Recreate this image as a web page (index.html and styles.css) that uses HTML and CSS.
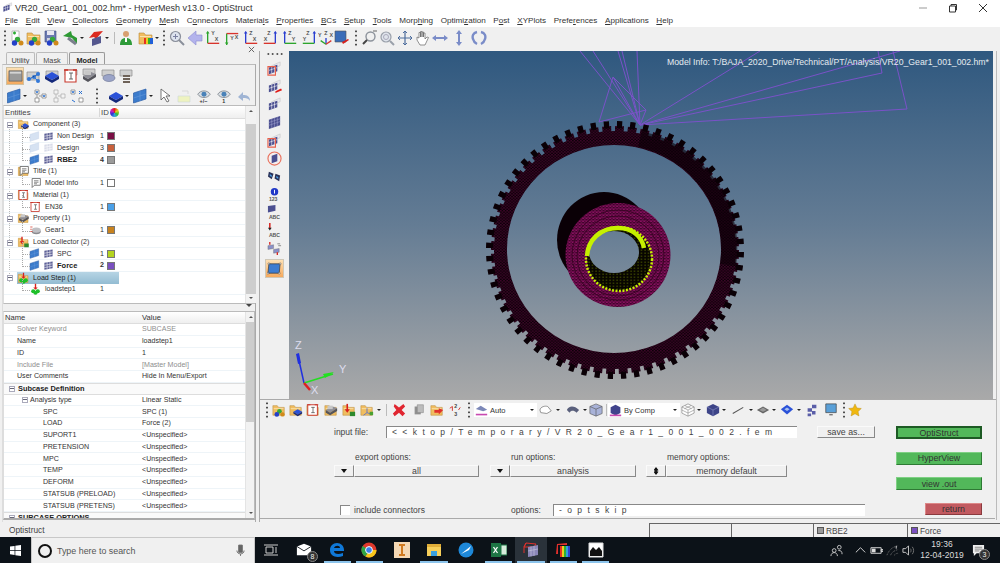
FILE: index.html
```html
<!DOCTYPE html>
<html lang="en">
<head>
<meta charset="utf-8">
<title>VR20_Gear1_001_002.hm* - HyperMesh v13.0 - OptiStruct</title>
<link rel="stylesheet" href="styles.css">
</head>
<body>
<svg class="defs" aria-hidden="true">
  <symbol id="fld" viewBox="0 0 16 16"><path d="M1 3h5l1.500 2H14v9H1z" fill="#f0bd60" stroke="#b98a3a" stroke-width=".6"/><path d="M2 6h11v1H2z" fill="#fbe3ae"/></symbol>
  <symbol id="balls" viewBox="0 0 16 16"><circle cx="8.500" cy="9.500" r="2.700" fill="#35a83a"/><circle cx="5.500" cy="13" r="2.700" fill="#2440c8"/><circle cx="12" cy="13" r="2.500" fill="#d08a1a"/></symbol>
  <symbol id="dia" viewBox="0 0 16 16"><path d="M8 4l7 4-7 4-7-4z" fill="#2b52d8"/><path d="M1 8v3l7 4 7-4V8l-7 4z" fill="#14287a"/></symbol>
  <symbol id="pln" viewBox="0 0 16 16"><path d="M1.500 5L14 1v10L1.500 15z" fill="#3c7ccc" stroke="#2a5da8" stroke-width=".7"/><path d="M8 3v10M1.500 10L14 6" stroke="#6a9cdc" stroke-width=".5"/></symbol>
  <symbol id="gpl" viewBox="0 0 16 16"><path d="M1.500 5L14 1v10L1.500 15z" fill="#d6e2f2" stroke="#c2d2e8" stroke-width=".7"/></symbol>
  <symbol id="msh" viewBox="0 0 16 16"><path d="M2 4l12-2v10L2 14z" fill="#5c5f96"/><path d="M6 3v10.500M10 2.500v10.500M2 7.500l12-2M2 11l12-2" stroke="#fff" stroke-width=".8"/></symbol>
  <symbol id="gms" viewBox="0 0 16 16"><path d="M2 4l12-2v10L2 14z" fill="#d8dbe8"/><path d="M6 3v10.500M10 2.500v10.500M2 7.500l12-2M2 11l12-2" stroke="#fff" stroke-width=".8"/></symbol>
  <symbol id="flt" viewBox="0 0 16 16"><path d="M2 8l8-4 5 2-8 5z" fill="#8e8e96"/><path d="M2 8v3l5 3 8-5V6l-8 5z" fill="#55555c"/><path d="M4 3h6v4H4z" fill="#c8c8c8"/></symbol>
  <symbol id="mat" viewBox="0 0 16 16"><path d="M2 2h11v12H2z" fill="#fff" stroke="#c8382c" stroke-width="1.100"/><path d="M6 5h4M8 5v6M6 11h4" stroke="#555" stroke-width=".9"/><path d="M1 2h4M10 2h4" stroke="#c8382c" stroke-width="1.400"/></symbol>
  <symbol id="note" viewBox="0 0 16 16"><path d="M3.500 2h11v9h-8l-3 3z" fill="#fff" stroke="#444" stroke-width=".9"/><path d="M6 5h6M6 7h6M6 9h4" stroke="#444" stroke-width=".8"/></symbol>
  <symbol id="prop" viewBox="0 0 16 16"><ellipse cx="9" cy="10" rx="6" ry="3.500" fill="#8a8a8e"/><ellipse cx="9" cy="8" rx="6" ry="3.500" fill="#c0c0c4"/><path d="M1 4h3M1 7h2M1 10h3" stroke="#d03a2c" stroke-width="1"/></symbol>
  <symbol id="lc" viewBox="0 0 16 16"><path d="M6 1v7" stroke="#d8201c" stroke-width="1.800"/><path d="M3 7l3 4 3-4z" fill="#d8201c"/><path d="M9 10h6v5H9z" fill="#2d8a2d"/></symbol>
  <symbol id="ls" viewBox="0 0 16 16"><path d="M8 1v6" stroke="#d8201c" stroke-width="1.800"/><path d="M5 6l3 3 3-3z" fill="#d8201c"/><circle cx="5" cy="11" r="2.800" fill="#1fbf2a"/><circle cx="11" cy="11" r="2.800" fill="#1fbf2a"/><circle cx="8" cy="13" r="2.800" fill="#1fbf2a"/></symbol>
  <symbol id="comp" viewBox="0 0 16 16"><use href="#fld"/><path d="M10 7l5 3-5 3-5-3z" fill="#2b52d8"/><path d="M5 10v2l5 3 5-3v-2l-5 3z" fill="#14287a"/></symbol>
  <symbol id="eye" viewBox="0 0 16 16"><path d="M1 6c3-5 11-5 14 0-3 5-11 5-14 0z" fill="#d8dde2" stroke="#707880" stroke-width=".8"/><circle cx="8" cy="6" r="2.800" fill="#4a82b8"/></symbol>
  <symbol id="gpm" viewBox="0 0 16 16"><path d="M5 5l9-4v4l-9 4z" fill="#e8e8ee" stroke="#bbb" stroke-width=".5"/><path d="M2 7l9-3v7l-9 3z" fill="#4b4f90"/><path d="M5 6v7M8 5v7M2 10l9-3" stroke="#fff" stroke-width=".6"/></symbol>
</svg>

<header class="titlebar">
  <svg class="ti" viewBox="0 0 16 16"><use href="#gpm"/></svg>
  <span class="tt">VR20_Gear1_001_002.hm* - HyperMesh v13.0 - OptiStruct</span>
  <span class="winbtn">
    <svg viewBox="0 0 10 10"><path d="M1 5h8" stroke="#999"/></svg>
    <svg viewBox="0 0 10 10"><path d="M1.500 3h6v6h-6zM3 3V1.500h5.500V7H7.500" fill="none" stroke="#333"/></svg>
    <svg viewBox="0 0 10 10"><path d="M1 1l8 8M9 1l-8 8" stroke="#333"/></svg>
  </span>
</header>
<nav class="menubar">
  <span><u>F</u>ile</span><span><u>E</u>dit</span><span><u>V</u>iew</span><span><u>C</u>ollectors</span><span><u>G</u>eometry</span><span><u>M</u>esh</span><span>C<u>o</u>nnectors</span><span>Materia<u>l</u>s</span><span><u>P</u>roperties</span><span><u>B</u>Cs</span><span><u>S</u>etup</span><span><u>T</u>ools</span><span>Morp<u>h</u>ing</span><span>Optimi<u>z</u>ation</span><span>P<u>o</u>st</span><span><u>X</u>YPlots</span><span>Prefe<u>r</u>ences</span><span><u>A</u>pplications</span><span><u>H</u>elp</span>
</nav>

<div class="toolbar">
  <i class="dots"></i>
  <span class="c w17"><svg viewBox="0 0 16 16"><path d="M3 1h7v10H3z" fill="#fff" stroke="#999" stroke-width=".6"/><path d="M4 3h3M5.500 1.500v3" stroke="#2cab33" stroke-width="1.500"/><use href="#balls"/></svg></span>
  <span class="c"><svg viewBox="0 0 16 16"><use href="#fld"/><use href="#balls"/></svg></span>
  <span class="c"><svg viewBox="0 0 16 16"><path d="M1 1h11v11H1z" fill="#6c7ab2" stroke="#3e4a80" stroke-width=".6"/><path d="M3 1h7v4H3z" fill="#e8e8f2"/><path d="M3 8h6v4H3z" fill="#d2d2de"/><use href="#balls"/></svg></span>
  <span class="c"><svg viewBox="0 0 16 16"><path d="M9 1L1 6l9 2 5 6V8L10 5z" fill="#2e9a34"/><path d="M6 8l8 6" stroke="#7b7f8c" stroke-width="3"/></svg></span><i class="caret"></i>
  <span class="c w17"><svg viewBox="0 0 16 16"><path d="M15 1L6 2 1 8l5-1 2 2z" fill="#dc2a20"/><path d="M4 9l9-3v7l-9 3z" fill="#54578e"/></svg></span><i class="caret"></i>
  <i class="sep"></i>
  <span class="c w20"><svg viewBox="0 0 16 16"><circle cx="8" cy="4" r="3" fill="#d8a070"/><path d="M2 15c0-6 3-7 6-7s6 1 6 7z" fill="#2f9b3a"/><path d="M7 8h2v4H7z" fill="#fff"/></svg></span>
  <span class="c w19"><svg viewBox="0 0 16 16"><use href="#fld"/><path d="M6 8h2v6H6z" fill="#e83020"/><path d="M8 8h2v6H8z" fill="#e8d020"/><path d="M10 8h2v6h-2z" fill="#30b030"/><path d="M12 8h3v6h-3z" fill="#2060d8"/></svg></span><i class="caret w5"></i>
  <i class="dots w7"></i>
  <span class="c w19"><svg viewBox="0 0 16 16"><circle cx="6.500" cy="6.500" r="5" fill="#dde3ee" stroke="#8a8f9a" stroke-width="1.200"/><path d="M10 10l5 5" stroke="#8a8f9a" stroke-width="2"/><path d="M4 6.500h5M6.500 4v5" stroke="#7a80a0"/></svg></span>
  <span class="c"><svg viewBox="0 0 16 16"><path d="M9 1v4h6v6H9v4L1 8z" fill="#b3b3ec" stroke="#8c8cd0" stroke-width=".6"/></svg></span>
  <span class="c"><svg class="ax" viewBox="0 0 18 18"><path d="M3 2v13" stroke="#2ca52c" stroke-width="1.500"/><path d="M3 15h13" stroke="#d8342c" stroke-width="1.500"/><path d="M1 4l2-3 2 3z" fill="#2ca52c"/><text x="7" y="6">Y</text><text x="11" y="12">X</text></svg></span>
  <span class="c w20"><svg class="ax" viewBox="0 0 18 18"><path d="M3 4v13" stroke="#2ca52c" stroke-width="1.500"/><path d="M3 4h13" stroke="#d8342c" stroke-width="1.500"/><path d="M1 14l2 3 2-3z" fill="#2ca52c"/><text x="7" y="11">Y</text><text x="12" y="10">X</text></svg></span>
  <span class="c"><svg class="ax" viewBox="0 0 18 18"><path d="M3 2v13" stroke="#2a3ed0" stroke-width="1.500"/><path d="M3 15h13" stroke="#d8342c" stroke-width="1.500"/><path d="M1 4l2-3 2 3z" fill="#2a3ed0"/><text x="7" y="6">Z</text><text x="11" y="12">X</text></svg></span>
  <span class="c w20"><svg class="ax" viewBox="0 0 18 18"><path d="M15 2v13" stroke="#2a3ed0" stroke-width="1.500"/><path d="M2 15h13" stroke="#d8342c" stroke-width="1.500"/><path d="M13 4l2-3 2 3z" fill="#2a3ed0"/><text x="6" y="6">Z</text><text x="2" y="12">X</text></svg></span>
  <span class="c w20"><svg class="ax" viewBox="0 0 18 18"><path d="M3 2v13" stroke="#2a3ed0" stroke-width="1.500"/><path d="M3 15h13" stroke="#2ca52c" stroke-width="1.500"/><path d="M1 4l2-3 2 3z" fill="#2a3ed0"/><text x="7" y="6">Z</text><text x="11" y="12">Y</text></svg></span>
  <span class="c"><svg class="ax" viewBox="0 0 18 18"><path d="M15 2v13" stroke="#2a3ed0" stroke-width="1.500"/><path d="M2 15h13" stroke="#2ca52c" stroke-width="1.500"/><path d="M13 4l2-3 2 3z" fill="#2a3ed0"/><text x="6" y="6">Z</text><text x="2" y="12">Y</text></svg></span>
  <span class="c w16"><svg class="ax" viewBox="0 0 18 18"><path d="M9 9v7" stroke="#2a3ed0" stroke-width="1.500"/><path d="M9 16L3 12" stroke="#2ca52c" stroke-width="1.500"/><path d="M9 16l6-4" stroke="#d8342c" stroke-width="1.500"/><text x="0" y="8">Y</text><text x="7" y="6">Z</text><text x="13" y="8">X</text></svg></span>
  <span class="c w16"><svg viewBox="0 0 16 16"><path d="M1 1h11v11H1z" fill="#3a6cb8" stroke="#555" stroke-width=".6"/><path d="M15 10l-6 4-1-2 6-3z" fill="#d8201c"/></svg></span>
  <i class="dots w12"></i>
  <span class="c w16"><svg viewBox="0 0 16 16"><circle cx="8.500" cy="6.500" r="4.500" fill="none" stroke="#8d939c" stroke-width="1.400"/><path d="M5 10l-4 4" stroke="#444" stroke-width="2"/><path d="M11 1h4" stroke="#666"/></svg></span>
  <span class="c"><svg viewBox="0 0 16 16"><circle cx="7" cy="7" r="5" fill="#dfe4ec" stroke="#9aa0aa" stroke-width="1.200"/><circle cx="7" cy="7" r="2.500" fill="none" stroke="#aab"/><path d="M11 11l4 4" stroke="#9aa0aa" stroke-width="2"/></svg></span>
  <span class="c"><svg viewBox="0 0 16 16"><path d="M8 1v14M1 8h14" stroke="#4c6c9c" stroke-width="1.200"/><path d="M6 3l2-2 2 2M6 13l2 2 2-2M3 6L1 8l2 2M13 6l2 2-2 2" fill="none" stroke="#4c6c9c"/></svg></span>
  <span class="c"><svg viewBox="0 0 16 16"><path d="M5 15l-3-5V7l2 1V2.500h1.500V7V1.500H7V7V2h1.500v5V3H10v6l2-2 1.500.5L10 15z" fill="#fff" stroke="#666" stroke-width=".7"/></svg></span>
  <span class="c w16"><svg viewBox="0 0 16 16"><path d="M0 8l4-3v2h8V5l4 3-4 3V9H4v2z" fill="#7a8cc8"/></svg></span>
  <span class="c w22"><svg viewBox="0 0 16 16"><path d="M8 0l3 4H9v8h2l-3 4-3-4h2V4H5z" fill="#7a8cc8"/></svg></span>
  <span class="c"><svg viewBox="0 0 16 16"><path d="M6 2C2 3 1 6 2 9c.5 2 2 4 4 5M10 2c4 1 5 4 4 7-.5 2-2 4-4 5" fill="none" stroke="#7a8cc8" stroke-width="2.400"/></svg></span>
</div>

<main class="main">
  <section class="left">
    <svg class="closex" viewBox="0 0 8 8"><path d="M1 1l6 6M7 1L1 7" stroke="#555"/></svg>
    <div class="tabs">
      <span class="tab t1">Utility</span><span class="tab t2">Mask</span><span class="tab t3">Model</span>
    </div>
    <div class="lbody">
      <div class="lrow r1">
        <span class="hl"><svg viewBox="0 0 16 16"><path d="M1 3h14v11H1z" fill="#9a9a9a" stroke="#555" stroke-width=".7"/><path d="M2 4h12v2H2z" fill="#d4d4d4"/></svg></span>
        <span class="c w18"><svg viewBox="0 0 16 16"><path d="M2 4h12v8H2z" fill="#cfcfcf" stroke="#8c8c8c" stroke-width=".7"/><circle cx="9" cy="9" r="2" fill="#3278d8"/><circle cx="4" cy="11" r="2" fill="#3278d8"/><circle cx="13" cy="6" r="2" fill="#3278d8"/><circle cx="13" cy="13" r="2" fill="#3278d8"/><path d="M4 11l5-2 4-3M9 9l4 4" stroke="#3278d8"/></svg></span>
        <span class="c w19"><svg viewBox="0 0 16 16"><path d="M2 3h12v6H2z" fill="#cfcfcf" stroke="#8c8c8c" stroke-width=".7"/><use href="#dia"/></svg></span>
        <span class="c w19"><svg viewBox="0 0 16 16"><path d="M2 2h12v5H2z" fill="#cfcfcf" stroke="#8c8c8c" stroke-width=".7"/><use href="#mat"/></svg></span>
        <span class="c w18"><svg viewBox="0 0 16 16"><path d="M2 1h12v6H2z" fill="#cfcfcf" stroke="#8c8c8c" stroke-width=".7"/><use href="#flt"/></svg></span>
        <span class="c w19"><svg viewBox="0 0 16 16"><path d="M2 2h12v6H2z" fill="#cfcfcf" stroke="#8c8c8c" stroke-width=".7"/><ellipse cx="9" cy="10" rx="6" ry="3.500" fill="#9ba4c8" stroke="#707898" stroke-width=".7"/></svg></span>
        <span class="c w18"><svg viewBox="0 0 16 16"><path d="M2 2h12v6H2z" fill="#cfcfcf" stroke="#8c8c8c" stroke-width=".7"/><path d="M5 7h7v2H5zM5 10h7v2H5zM5 13h7v2H5z" fill="#6e6258"/></svg></span>
      </div>
      <div class="lrow r2">
        <span class="c w16"><svg viewBox="0 0 16 16"><use href="#pln"/></svg></span><i class="caret w8"></i>
        <span class="c w20"><svg viewBox="0 0 16 16"><path d="M3 2h4v4H3zM3 10h4v4H3zM10 6h4v4h-4z" fill="#fff" stroke="#777" stroke-width=".7"/><path d="M4 3l1 2 1-2M11 7l1 2 1-2" stroke="#2a70d0" fill="none"/><path d="M5 6v4M7 8h3" stroke="#999"/></svg></span>
        <span class="c w18"><svg viewBox="0 0 16 16"><path d="M3 2h4v4H3zM3 10h4v4H3zM10 6h4v4h-4z" fill="#f4f4f4" stroke="#aaa" stroke-width=".7"/><path d="M5 6v4M7 8h3" stroke="#bbb"/></svg></span>
        <span class="c w18"><svg viewBox="0 0 16 16"><path d="M2 2h4v4H2zM10 10h4v4h-4z" fill="#fff" stroke="#777" stroke-width=".7"/><path d="M3 3l1 2 1-2M10 3l3 3M13 3l-3 3M3 12l3 2" stroke="#2a70d0" fill="none"/></svg></span>
        <i class="dots w22"></i>
        <span class="c w16"><svg viewBox="0 0 16 16"><use href="#dia"/></svg></span><i class="caret w8"></i>
        <span class="c w16"><svg viewBox="0 0 16 16"><use href="#pln"/></svg></span><i class="caret w8"></i>
        <span class="c w18"><svg viewBox="0 0 16 16"><path d="M4 1v11l3-3 3 5 2-1-3-5h4z" fill="#fff" stroke="#555" stroke-width=".8"/></svg></span>
        <span class="c w20"><svg viewBox="0 0 16 16"><path d="M2 8h12v6H2z" fill="#eef3c0" stroke="#cdd8d8" stroke-width=".6"/><path d="M6 3h6v3" fill="none" stroke="#d8d8d8"/></svg></span>
        <span class="c w20"><svg viewBox="0 0 16 18"><use href="#eye"/><text class="eyet" x="3" y="17">+/−</text></svg></span>
        <span class="c w20"><svg viewBox="0 0 16 18"><use href="#eye"/><text class="eyet" x="6" y="17">1</text></svg></span>
        <span class="c w20"><svg viewBox="0 0 16 16"><path d="M2 9l5-5v3c4 0 7 1 7 6-2-3-4-3-7-3v3z" fill="#9fb4d4"/></svg></span>
      </div>

      <div class="split tree">
        <div class="tcol">
          <div class="thead"><span class="th1">Entities</span><span class="th2">ID</span><span class="wheel"></span></div>
          <div class="row l0"><b class="ex"></b><svg class="ic" viewBox="0 0 16 16"><use href="#comp"/></svg>Component (3)</div>
          <div class="row l1"><svg class="ic2" viewBox="0 0 16 16"><use href="#gpl"/></svg><svg class="ic2" viewBox="0 0 16 16"><use href="#msh"/></svg><span class="t">Non Design</span><em>1</em><s class="sw s1"></s></div>
          <div class="row l1"><svg class="ic2" viewBox="0 0 16 16"><use href="#gpl"/></svg><svg class="ic2" viewBox="0 0 16 16"><use href="#gms"/></svg><span class="t">Design</span><em>3</em><s class="sw s2"></s></div>
          <div class="row l1 bold"><svg class="ic2" viewBox="0 0 16 16"><use href="#pln"/></svg><svg class="ic2" viewBox="0 0 16 16"><use href="#msh"/></svg><span class="t">RBE2</span><em>4</em><s class="sw s3"></s></div>
          <div class="row l0"><b class="ex"></b><svg class="ic" viewBox="0 0 16 16"><use href="#fld"/><use href="#note"/></svg>Title (1)</div>
          <div class="row l2"><svg class="ic" viewBox="0 0 16 16"><use href="#note"/></svg><span class="t">Model Info</span><em>1</em><s class="sw s4"></s></div>
          <div class="row l0"><b class="ex"></b><svg class="ic" viewBox="0 0 16 16"><use href="#fld"/><use href="#mat"/></svg>Material (1)</div>
          <div class="row l2"><svg class="ic" viewBox="0 0 16 16"><use href="#mat"/></svg><span class="t">EN36</span><em>1</em><s class="sw s5"></s></div>
          <div class="row l0"><b class="ex"></b><svg class="ic" viewBox="0 0 16 16"><use href="#fld"/><use href="#flt"/></svg>Property (1)</div>
          <div class="row l2"><svg class="ic" viewBox="0 0 16 16"><use href="#prop"/></svg><span class="t">Gear1</span><em>1</em><s class="sw s6"></s></div>
          <div class="row l0"><b class="ex"></b><svg class="ic" viewBox="0 0 16 16"><use href="#fld"/><use href="#lc"/></svg>Load Collector (2)</div>
          <div class="row l1"><svg class="ic2" viewBox="0 0 16 16"><use href="#pln"/></svg><svg class="ic2" viewBox="0 0 16 16"><use href="#msh"/></svg><span class="t">SPC</span><em>1</em><s class="sw s7"></s></div>
          <div class="row l1 bold"><svg class="ic2" viewBox="0 0 16 16"><use href="#pln"/></svg><svg class="ic2" viewBox="0 0 16 16"><use href="#msh"/></svg><span class="t">Force</span><em>2</em><s class="sw s8"></s></div>
          <div class="row l0 sel"><b class="ex"></b><svg class="ic" viewBox="0 0 16 16"><use href="#fld"/><use href="#ls"/></svg>Load Step (1)</div>
          <div class="row l2"><svg class="ic" viewBox="0 0 16 16"><use href="#ls"/></svg><span class="t">loadstep1</span><em>1</em></div>
        </div>
        <div class="sb sb1"><i class="up"></i><i class="thumb"></i><i class="dn"></i></div>
      </div>

      <div class="sash"><i></i></div>

      <div class="split props">
        <div class="pcol">
          <div class="phead"><span>Name</span><span>Value</span></div>
          <div class="pr gy"><span>Solver Keyword</span><span>SUBCASE</span></div>
          <div class="pr"><span>Name</span><span>loadstep1</span></div>
          <div class="pr"><span>ID</span><span>1</span></div>
          <div class="pr gy"><span>Include File</span><span>[Master Model]</span></div>
          <div class="pr"><span>User Comments</span><span>Hide In Menu/Export</span></div>
          <div class="pr sec"><b class="ex"></b><span>Subcase Definition</span></div>
          <div class="pr at"><span><b class="ex"></b>Analysis type</span><span>Linear Static</span></div>
          <div class="pr ch"><span>SPC</span><span>SPC (1)</span></div>
          <div class="pr ch"><span>LOAD</span><span>Force (2)</span></div>
          <div class="pr ch"><span>SUPORT1</span><span>&lt;Unspecified&gt;</span></div>
          <div class="pr ch"><span>PRETENSION</span><span>&lt;Unspecified&gt;</span></div>
          <div class="pr ch"><span>MPC</span><span>&lt;Unspecified&gt;</span></div>
          <div class="pr ch"><span>TEMP</span><span>&lt;Unspecified&gt;</span></div>
          <div class="pr ch"><span>DEFORM</span><span>&lt;Unspecified&gt;</span></div>
          <div class="pr ch"><span>STATSUB (PRELOAD)</span><span>&lt;Unspecified&gt;</span></div>
          <div class="pr ch"><span>STATSUB (PRETENS)</span><span>&lt;Unspecified&gt;</span></div>
          <div class="pr sec"><b class="ex"></b><span>SUBCASE OPTIONS</span></div>
        </div>
        <div class="sb sb2"><i class="up"></i><i class="thumb"></i><i class="dn"></i></div>
      </div>
    </div>
  </section>

  <section class="right">
    <div class="top">
      <div class="rail">
        <i class="dots4"></i>
        <svg viewBox="0 0 16 16"><use href="#gpm"/><path d="M1 6h8v9H1z" fill="none" stroke="#e8604c" stroke-width="1.200"/></svg>
        <svg viewBox="0 0 16 16"><use href="#gpm"/><path d="M15 10l-6 3 0 2 7-3z" fill="#e01c18"/></svg>
        <svg viewBox="0 0 16 16"><use href="#gpm"/></svg>
        <svg viewBox="0 0 16 16"><path d="M2 5l12-4v10L2 15z" fill="#4b4f90"/><path d="M5 4v10M8 3v10M11 2v10M2 8l12-4M2 11l12-4" stroke="#9a9ccc" stroke-width=".6"/></svg>
        <svg viewBox="0 0 16 16"><use href="#gpm"/><path d="M1 6h8v9H1z" fill="none" stroke="#e8604c" stroke-width="1.200"/></svg>
        <svg viewBox="0 0 16 16"><circle cx="8" cy="8" r="7" fill="#f4eeee" stroke="#e8705c" stroke-width="1.200"/><path d="M5 5l6-2v8l-6 2z" fill="#4b4f90"/></svg>
        <svg viewBox="0 0 16 16"><path d="M2 3l5 2-2 6-4-3z" fill="#2a3158"/><path d="M9 5l5 2-1 6-5-3z" fill="#2a3158"/><path d="M3 6l2 2M10 8l2 2" stroke="#4aa0e8" stroke-width="1.500"/></svg>
        <svg viewBox="0 0 16 16"><ellipse cx="8" cy="5" rx="4" ry="4" fill="#2038c8"/><path d="M8 3v4" stroke="#fff"/><text class="rl" x="2" y="15">123</text></svg>
        <svg viewBox="0 0 16 16"><path d="M1 1l8-1v6L1 8z" fill="#4b4f90"/><text class="rl" x="2" y="15">ABC</text></svg>
        <svg viewBox="0 0 16 16"><path d="M3 0v6" stroke="#d8201c" stroke-width="1.600"/><path d="M1 5h4l-2 3z" fill="#222"/><text class="rl" x="2" y="15">ABC</text></svg>
        <svg viewBox="0 0 16 16"><path d="M1 5l6-1v4L1 9zM7 9l6-1v4l-6 1z" fill="#8a90c8" stroke="#666" stroke-width=".4"/><path d="M3 1v3M11 12v3" stroke="#d8201c" stroke-width="1.400"/><path d="M11 3h3M12 5h3" stroke="#888"/></svg>
        <span class="hlr"><svg viewBox="0 0 16 16"><path d="M2 3h12l-1 10H1z" fill="#3d7cd0" stroke="#333" stroke-width=".7"/><circle cx="2" cy="3" r="1" fill="#fff" stroke="#333" stroke-width=".5"/><circle cx="14" cy="3" r="1" fill="#fff" stroke="#333" stroke-width=".5"/><circle cx="1" cy="13" r="1" fill="#fff" stroke="#333" stroke-width=".5"/><circle cx="13" cy="13" r="1" fill="#fff" stroke="#333" stroke-width=".5"/></svg></span>
      </div>
      <div class="view">
        <svg class="scene" viewBox="289 51 704 348" preserveAspectRatio="none">
          <defs>
            <linearGradient id="bg" gradientUnits="userSpaceOnUse" x1="0" y1="51" x2="0" y2="399">
              <stop offset="0" stop-color="#2f587f"/><stop offset=".5" stop-color="#647c94"/><stop offset="1" stop-color="#a9a9a9"/>
            </linearGradient>
            <pattern id="m1" width="3.200" height="2.800" patternUnits="userSpaceOnUse"><rect width="3.200" height="2.800" fill="#0a0006"/><path d="M0 2.800L1.600 0L3.200 2.800" fill="none" stroke="#7c0c50" stroke-width=".42"/></pattern>
            <pattern id="m2" width="3.400" height="3" patternUnits="userSpaceOnUse"><rect width="3.400" height="3" fill="#8a1060"/><path d="M0 3L1.700 0L3.400 3M0 0h3.400" fill="none" stroke="#1a0010" stroke-width=".55"/></pattern>
            <pattern id="m3" width="3.500" height="3" patternUnits="userSpaceOnUse"><rect width="3.500" height="3" fill="#080600"/><path d="M1 .5v1.500" stroke="#a8cc00" stroke-width=".45"/></pattern>
          </defs>
          <rect x="289" y="51" width="704" height="348" fill="url(#bg)"/>
          <g class="wire">
            <path d="M640 125L882 73L878 51M640 125L907 109L893 51M640 125L900 51M640 125L760 51M640 125L580 51M640 125L593 51M640 125L618 51M640 125L622 51M640 125L637 51M613 77L599 122L646 110L640 125M613 77L646 110M613 77L640 125"/>
          </g>
          <circle class="t1g" cx="615" cy="250" r="121" pathLength="120"/>
          <circle class="t2g" cx="615" cy="250" r="125.500" pathLength="120"/>
          <path fill="url(#m1)" fill-rule="evenodd" d="M494 250a121 119 0 1 0 242 0a121 119 0 1 0-242 0ZM507 249a107 104 0 1 0 214 0a107 104 0 1 0-214 0Z"/>
          <path class="shade" d="M640 139A114 112 0 0 1 728 265"/>
          <ellipse cx="604" cy="240" rx="47" ry="48" fill="#0a0006"/>
          <ellipse cx="618" cy="255" rx="52.500" ry="52" fill="url(#m2)"/>
          <ellipse cx="618" cy="256" rx="41" ry="40" class="hubr"/>
          <ellipse cx="618" cy="255" rx="46" ry="45" class="hubr"/>
          <ellipse cx="619" cy="259" rx="32" ry="32" fill="url(#m3)"/>
          <ellipse cx="619" cy="259" rx="33" ry="32" class="yz"/>
          <ellipse cx="614" cy="252" rx="25" ry="21" fill="url(#bg)"/>
          <path d="M587 256c1-16 13-28 31-28 15 0 24 9 26 20" class="yt"/>
          <g class="axes">
            <path d="M304 383L298 356" class="az"/><path d="M296 354l3-1 2 10-3 1z" fill="#2030e0"/>
            <path d="M304 383L333 374" class="ay"/><path d="M323 374l11-2-9 6z" fill="#22e020"/>
            <path d="M304 383L310 390" class="ax2"/>
            <text x="295" y="349">Z</text><text x="339" y="373">Y</text><text x="311" y="394">X</text>
          </g>
          <text class="minfo" x="989" y="65" text-anchor="end">Model Info: T:/BAJA_2020_Drive/Technical/PT/Analysis/VR20_Gear1_001_002.hm*</text>
        </svg>
      </div>
    </div>

    <div class="bar2">
      <i class="dots"></i>
      <span class="c"><svg viewBox="0 0 16 16"><use href="#fld"/><use href="#balls"/></svg></span>
      <span class="c w16"><svg viewBox="0 0 16 16"><use href="#comp"/></svg></span>
      <span class="c"><svg viewBox="0 0 16 16"><use href="#fld"/><use href="#mat"/></svg></span>
      <span class="c"><svg viewBox="0 0 16 16"><use href="#fld"/><use href="#flt"/></svg></span>
      <span class="c"><svg viewBox="0 0 16 16"><use href="#fld"/><use href="#lc"/></svg></span>
      <span class="c"><svg viewBox="0 0 16 16"><use href="#fld"/><path d="M8 6v5l-4 3M8 11l5 2" stroke="#5a70c8" fill="none"/><path d="M11 10h4v4h-4z" fill="#4aa030"/></svg></span><i class="caret"></i>
      <i class="sep"></i>
      <span class="c w22"><svg viewBox="0 0 16 16"><path d="M3 1l5 4 5-4 2 3-4 4 4 4-3 3-4-4-5 4-2-3 4-4-3-4z" fill="#e02630"/></svg></span>
      <span class="c"><svg viewBox="0 0 16 16"><path d="M3 4h7v9H3z" fill="#909090"/><path d="M6 2h7v9H6z" fill="#bcbcbc" stroke="#808080" stroke-width=".6"/></svg></span>
      <span class="c"><svg viewBox="0 0 16 16"><use href="#fld"/><path d="M15 8l-5-2v2H5v3h5v2z" fill="#e0302c"/></svg></span>
      <span class="c"><svg viewBox="0 0 16 16"><text class="nm" x="7" y="6">2</text><text class="nm" x="7" y="15">3</text><path d="M2 6l3-2v5M12 8l2-3" stroke="#d02820" fill="none"/></svg></span>
      <i class="dots w10"></i>
      <span class="combo"><svg viewBox="0 0 16 16"><path d="M1 6l6-4 8 5-5 2z" fill="#7c88b8"/><path d="M1 12h14v2H1z" fill="#c84ab0"/></svg><span>Auto</span><i class="caret"></i></span>
      <span class="c"><svg viewBox="0 0 16 16"><path d="M1 8c1-4 6-5 9-4l4 5-5 3-7-1z" fill="#fff" stroke="#888"/></svg></span><i class="caret"></i>
      <span class="c w20"><svg viewBox="0 0 16 16"><path d="M1 8c2-5 8-6 14 0l-3 3c-3-3-6-3-8 0z" fill="#5a607c"/></svg></span><i class="caret w5"></i>
      <span class="c w16"><svg viewBox="0 0 16 16"><path d="M8 1l7 3v8l-7 3-7-3V4z" fill="#a8b2d8" stroke="#555" stroke-width=".7"/><path d="M1 4l7 3 7-3M8 7v8" stroke="#555" stroke-width=".7" fill="none"/></svg></span>
      <i class="sep"></i>
      <span class="combo cb2"><svg viewBox="0 0 16 16"><path d="M8 1l6 3v7l-6 3-6-3V4z" fill="#40438c"/><path d="M1 13h14v2H1z" fill="#c84ab0"/></svg><span>By Comp</span><i class="caret"></i></span>
      <span class="c w16"><svg viewBox="0 0 16 16"><path d="M8 1l7 3.500v7L8 15l-7-3.500v-7z" fill="#fff" stroke="#777" stroke-width=".7"/><path d="M1 4.500L8 8l7-3.500M8 8v7M4.500 3L12 6.500M11.500 3L4 6.500M1 8l7 3.500L15 8" fill="none" stroke="#777" stroke-width=".6"/></svg></span><i class="caret"></i>
      <span class="c"><svg viewBox="0 0 16 16"><path d="M8 1l7 3.500v7L8 15l-7-3.500v-7z" fill="#3d4488"/><path d="M1 4.500L8 8l7-3.500M8 8v7" fill="none" stroke="#8a90c8" stroke-width=".7"/></svg></span><i class="caret w5"></i>
      <span class="c w22"><svg viewBox="0 0 16 16"><path d="M2 12L14 5" stroke="#555" stroke-width="1.200"/></svg></span><i class="caret w5"></i>
      <span class="c"><svg viewBox="0 0 16 16"><path d="M8 4l7 4-7 4-7-4z" fill="#666"/><path d="M8 5l4 3-4 2-4-2z" fill="#999"/></svg></span><i class="caret w5"></i>
      <span class="c w20"><svg viewBox="0 0 16 16"><path d="M8 2l7 5-7 6-7-6z" fill="#2b52d8"/><path d="M8 5l3 2-3 2-3-2z" fill="#a8c0f0"/></svg></span><i class="caret w5"></i>
      <span class="c w20"><svg viewBox="0 0 16 16"><path d="M8 2h5v4H8zM3 6h5v4H3zM8 9h4v4H8zM3 12h4v3H3z" fill="#5a5ea8"/></svg></span>
      <span class="c"><svg viewBox="0 0 16 16"><path d="M2 1h12v10H2z" fill="#5aa0d8" stroke="#444" stroke-width=".8"/><path d="M6 13h4v1H6z" fill="#333"/></svg></span>
      <i class="dots w7"></i>
      <span class="c w16"><svg viewBox="0 0 16 16"><path d="M8 1l2.200 4.700 5 .6-3.700 3.500 1 5L8 12.300 3.500 14.800l1-5L.8 6.300l5-.6z" fill="#f0b810" stroke="#b88a10" stroke-width=".5"/></svg></span>
    </div>

    <div class="hm">
      <div class="hml">
        <div class="hr1">
          <label class="lb">input file:</label>
          <span class="inp w411">&lt;&lt;ktop/Temporary/VR20_Gear1_001_002.fem</span>
          <button class="btn save">save as...</button>
        </div>
        <div class="hr2">
          <div class="og g1"><span class="ol">export options:</span><div class="og2"><button class="btn sm"><i class="dn2"></i></button><button class="btn gr">all</button></div></div>
          <div class="og g2"><span class="ol">run options:</span><div class="og2"><button class="btn sm"><i class="dn2"></i></button><button class="btn gr">analysis</button></div></div>
          <div class="og g3"><span class="ol">memory options:</span><div class="og2"><button class="btn sm"><i class="ud"></i></button><button class="btn gr">memory default</button></div></div>
        </div>
        <div class="hr3">
          <i class="chk"></i><label class="cl">include connectors</label>
          <label class="ol2">options:</label>
          <span class="inp w312">-optskip</span>
        </div>
      </div>
      <div class="hmr">
        <button class="btn green prim">OptiStruct</button>
        <button class="btn green">HyperView</button>
        <button class="btn green">view .out</button>
        <button class="btn red">return</button>
      </div>
    </div>
  </section>
</main>

<footer class="status">
  <span class="st0">Optistruct</span>
  <span class="cell c82"></span><span class="cell c82"></span>
  <span class="cell c94"><s class="sw s3"></s>RBE2</span>
  <span class="cell c93"><s class="sw s8"></s>Force</span>
</footer>

<div class="taskbar">
  <span class="start"><svg viewBox="0 0 12 12"><path d="M0 1.700L5 1v4.500H0zM5.800.9L12 0v5.500H5.800zM0 6.300h5v4.600L0 10.200zM5.800 6.300H12V12l-6.200-.9z" fill="#fff"/></svg></span>
  <span class="search"><i class="cort"></i><span class="stxt">Type here to search</span><svg viewBox="0 0 10 14"><path d="M3 1h4v8H3z" fill="#666" stroke="#666" stroke-linejoin="round"/><path d="M1 7c0 5 8 5 8 0M5 11v2" fill="none" stroke="#666"/></svg></span>
  <span class="tk"><svg viewBox="0 0 16 16"><path d="M1 3h14M1 13h14M3 5h7v6H3zM13 5v6" fill="none" stroke="#ccc"/></svg></span>
  <span class="tk mail"><svg viewBox="0 0 18 14"><path d="M1 3l8-3 8 3v10H1z" fill="#fff"/><path d="M1 3l8 5 8-5" fill="none" stroke="#0c1218"/></svg><b class="badge">8</b></span>
  <span class="tk run"><svg viewBox="0 0 16 16"><path d="M8 1c4 0 7 3 7 7v1H5c0 3 4 4 9 2v3c-6 2-13 1-13-6C1 4 4 1 8 1zm3 5c0-3-5-3-6 0z" fill="#0f78d8"/></svg></span>
  <span class="tk run"><svg viewBox="0 0 16 16"><circle cx="8" cy="8" r="7.500" fill="#e0382c"/><path d="M8 8L15.500 8A7.500 7.500 0 0 1 4.500 14.600z" fill="#f7c61a"/><path d="M8 8L4.500 14.600A7.500 7.500 0 0 1 1.500 4z" fill="#2fa544"/><circle cx="8" cy="8" r="3.400" fill="#3a80e8" stroke="#fff"/></svg></span>
  <span class="tk"><svg viewBox="0 0 16 16"><path d="M0 0h16v16H0z" fill="#f4d8b4"/><path d="M5 3h6M5 13h6M8 3v10" stroke="#d07a20" stroke-width="2"/></svg></span>
  <span class="tk run"><svg viewBox="0 0 16 16"><path d="M1 2h14v12H1z" fill="#f7cf5a"/><path d="M1 2h14v3H1z" fill="#e0ad38"/><path d="M5 9h6v5H5z" fill="#3aa0e0"/></svg></span>
  <span class="tk"><svg viewBox="0 0 16 16"><circle cx="8" cy="8" r="7.500" fill="#1e88d8"/><path d="M3 12L13 4l-2 4-4 2z" fill="#fff"/></svg></span>
  <span class="tk run"><svg viewBox="0 0 16 16"><path d="M0 1h10v14H0z" fill="#1d7544"/><path d="M10 3h6v10h-6z" fill="#d8ecdc" stroke="#1d7544"/><path d="M2.500 5l4 6M6.500 5l-4 6" stroke="#fff" stroke-width="1.300"/></svg></span>
  <span class="tk tka run"><svg viewBox="0 0 16 16"><path d="M3 1l10 1-2 3H1z" fill="none" stroke="#e0302c"/><path d="M1 5v6M1 5l2-4" stroke="#e0302c"/><path d="M5 5l10-2v10L5 15z" fill="#8a86b8"/><path d="M8 4.500v10M11 4v10M5 9l10-2" stroke="#c8c8dc" stroke-width=".6"/></svg></span>
  <span class="tk run"><svg viewBox="0 0 16 16"><path d="M2 2l10-1v2H3v9H1z" fill="#e0302c"/><path d="M5 4h2v11H5z" fill="#e83020"/><path d="M7 4h2v11H7z" fill="#e8d020"/><path d="M9 4h2v11H9z" fill="#30b030"/><path d="M11 4h2v11h-2z" fill="#30a0d8"/><path d="M13 4h2v11h-2z" fill="#3040d0"/></svg></span>
  <span class="tk run"><svg viewBox="0 0 16 16"><path d="M1 1h14v14H1z" fill="#fff" stroke="#ddd"/><path d="M2 14V9l3-4 3 3 3-3 3 4v5z" fill="#111"/></svg></span>
  <span class="tray">
    <svg viewBox="0 0 14 14"><circle cx="4.500" cy="7" r="2" fill="none" stroke="#ccc"/><circle cx="10" cy="3.500" r="2" fill="none" stroke="#ccc"/><path d="M1 13c0-5 7-5 7 0M9 7c3 0 4 1 4 4" fill="none" stroke="#ccc"/></svg>
    <svg viewBox="0 0 14 14"><path d="M2 9l5-5 5 5" fill="none" stroke="#ddd"/></svg>
    <svg viewBox="0 0 14 14"><path d="M1 4h11v6H1zM12 6h2v2h-2z" fill="none" stroke="#ddd"/><path d="M2 5h4v4H2z" fill="#ddd"/></svg>
    <svg viewBox="0 0 14 14"><path d="M1 12c3-7 7-9 12-10M5 12c1-3 4-5 8-6M9 12c1-1 2-2 4-2" fill="none" stroke="#777" stroke-dasharray="1 1"/><path d="M11 2v3" stroke="#ddd"/></svg>
    <svg viewBox="0 0 14 14"><path d="M1 5h3l3-3v10L4 9H1z" fill="none" stroke="#ccc"/><path d="M9 5c1 1 1 3 0 4M11 3c2 2 2 6 0 8" fill="none" stroke="#777"/></svg>
    <span class="clock"><span>19:36</span><span>12-04-2019</span></span>
    <span class="notif"><svg viewBox="0 0 14 14"><path d="M1 1h12v9H5l-3 3v-3H1z" fill="#eee"/><path d="M3 3.500h8M3 5.500h8M3 7.500h5" stroke="#555" stroke-width=".7"/></svg><b class="badge">3</b></span>
  </span>
</div>
</body>
</html>
```
FILE: styles.css
```css
* { box-sizing: border-box; }
html, body { margin: 0; padding: 0; }
body {
  width: 1000px; height: 563px; overflow: hidden;
  display: flex; flex-direction: column;
  font: 8.1px "Liberation Sans", Arial, sans-serif;
  color: #222; background: #f0f0f0;
}
i, b.ex, s { display: block; text-decoration: none; }
em { font-style: normal; }
svg { display: block; }
.defs { position: absolute; width: 0; height: 0; }

.titlebar { height: 14px; background: #fff; display: flex; align-items: center; padding-left: 2px; flex: none; }
.ti { width: 11px; height: 11px; margin-right: 2px; }
.tt { font-size: 9px; color: #333; padding-top: 2px; }
.winbtn { margin-left: auto; display: flex; gap: 20px; padding-right: 12px; padding-top: 2px; }
.winbtn svg { width: 10px; height: 10px; }

.menubar { height: 13px; background: #fff; display: flex; gap: 7.670px; padding-left: 5px; align-items: center; flex: none; color: #333; }
.menubar u { text-underline-offset: 1px; }

.toolbar { height: 24px; flex: none; display: flex; align-items: center; padding-left: 2px; padding-bottom: 2px; }
.c { width: 18px; height: 16px; display: flex; align-items: center; justify-content: center; flex: none; }
.c svg { width: 16px; height: 16px; flex: none; }
.c .ax text { font: 700 6px "Liberation Sans", sans-serif; fill: #555; }
.w16 { width: 16px; } .w17 { width: 17px; } .w18 { width: 18px; } .w19 { width: 19px; }
.w20 { width: 20px; } .w22 { width: 22px; } .w12 { width: 12px; }
.w5 { width: 5px; } .w7 { width: 7px; } .w8 { width: 8px; }
.dots { width: 6px; height: 18px; flex: none; background: radial-gradient(circle, #222 0.8px, transparent 1.1px) center top / 2px 4.500px repeat-y; }
.dots.w5 { width: 5px; } .dots.w7 { width: 7px; } .dots.w10 { width: 10px; } .dots.w12 { width: 12px; } .dots.w22 { width: 22px; }
.caret { width: 8px; height: 16px; flex: none; position: relative; }
.caret::after { content: ""; position: absolute; left: 1px; top: 7px; border: 2px solid transparent; border-top: 2.500px solid #222; border-bottom: 0; }
.caret.w5 { width: 5px; } .caret.w5::after { left: 0; }
.sep { width: 4px; height: 16px; flex: none; position: relative; }
.sep::after { content: ""; position: absolute; left: 1.500px; top: 2px; height: 12px; width: 1px; background: #bbb; }

.main { flex: 1; min-height: 0; display: flex; }
.left { width: 258px; flex: none; position: relative; padding: 1px 0 0 2px; display: flex; flex-direction: column; }
.closex { position: absolute; right: 3px; top: -5px; width: 7px; height: 7px; }
.tabs { height: 13px; display: flex; padding-left: 4px; flex: none; gap: 1px; font-size: 7.300px; }
.tab { height: 13px; border: 1px solid #bbb; border-bottom: 0; border-radius: 2px 2px 0 0; padding-top: 3px; text-align: center; color: #444; }
.t1 { width: 29px; } .t2 { width: 32px; }
.t3 { width: 36px; font-weight: 700; color: #222; border-color: #999; }
.lbody { flex: 1; min-height: 0; display: flex; flex-direction: column; border-right: 1px solid #aaa; border-left: 1px solid #ddd; width: 254px; border-top: 1px solid #bbb; margin-top: -1px; }
.lrow { display: flex; align-items: center; flex: none; padding-left: 3px; }
.r1 { height: 21px; }
.r2 { height: 19px; padding-left: 3px; }
.hl { width: 18px; height: 18px; background: linear-gradient(#fde0b4, #f6a95c); border: 1px solid #cfc0a0; display: flex; align-items: center; justify-content: center; flex: none; }
.hl svg { width: 15px; height: 15px; }
.eyet { font: 700 6px "Liberation Sans", sans-serif; fill: #333; }

.split { display: flex; background: #fff; flex: none; border: 1px solid #bbb; border-left-color: #ddd; }
.tree { height: 199px; }
.props { height: 209px; overflow: hidden; border-bottom: 2px solid #aaa; }
.tcol, .pcol { width: 241px; flex: none; overflow: hidden; position: relative; font-size: 7.100px; }
.thead { height: 13px; display: flex; align-items: center; background: linear-gradient(#fff, #efefef); border-bottom: 1px solid #ddd; color: #444; font-size: 7.800px; }
.th1 { width: 96px; padding-left: 1px; border-right: 1px solid #d8d8d8; }
.th2 { width: 9px; padding-left: 1px; }
.wheel { width: 9px; height: 9px; border-radius: 50%; background: conic-gradient(#e02020, #e8d020, #30c030, #30a0e0, #3030d0, #d020c0, #e02020); margin-left: 1px; }
.row { height: 11.750px; display: flex; align-items: center; position: relative; border-bottom: 1px solid #eef4f8; color: #333; }
.row em { position: absolute; left: 96px; width: 6px; text-align: left; }
.row .t { position: absolute; }
.row.l1 .t { left: 53px; }
.row.l2 .t { left: 41px; }
.row .sw { position: absolute; left: 103px; top: 1.500px; width: 8px; height: 8px; border: 1px solid #777; }
.l0 { padding-left: 13px; gap: 1px; }
.l1 { padding-left: 25px; gap: 1px; }
.l2 { padding-left: 25px; }
.l1::before, .l2::before { content: ""; position: absolute; left: 18px; top: -6px; width: 7px; height: 12px; border-left: 1px dotted #aaa; border-bottom: 1px dotted #aaa; }
.row .ex { position: absolute; left: 3px; top: 3px; }
.tcol::before { content: ""; position: absolute; left: 5px; top: 18px; height: 158px; border-left: 1px dotted #bbb; }
.ex { width: 6px; height: 6px; border: 1px solid #aab; background: #fff; position: relative; flex: none; z-index: 1; }
.ex::after { content: ""; position: absolute; left: 0; top: 1.500px; width: 4px; height: 1px; background: #667; }
.ic { width: 13px; height: 12px; flex: none; margin-right: 2px; }
.ic2 { width: 11px; height: 11px; flex: none; }
.l1 .ic2 + .ic2 { margin-left: 2px; }
.row.bold .t { font-weight: 700; color: #222; font-size: 7.500px; }
.row.bold em { font-weight: 700; }
.sel { background: linear-gradient(#b6d4e4, #93bcd2); margin-left: 13px; padding-left: 0; width: 102px; border-bottom: 0; color: #222; }
.sel .ex { left: -10px; }
.s1 { background: #7a0f45; } .s2 { background: #c8603c; } .s3 { background: #9b9b9b; } .s4 { background: #fff; }
.s5 { background: #4aa0e8; } .s6 { background: #c8821e; } .s7 { background: #b4d41e; } .s8 { background: #7a50c0; }

.sb { width: 11px; flex: none; background: #f2f2f2; position: relative; border-left: 1px solid #e4e4e4; }
.sb .up, .sb .dn { position: absolute; left: 3px; border: 2px solid transparent; width: 0; height: 0; }
.sb .up { top: 4px; border-bottom: 2.500px solid #555; border-top: 0; }
.sb .dn { bottom: 4px; border-top: 2.500px solid #555; border-bottom: 0; }
.sb .thumb { position: absolute; left: 0; right: 0; background: #cdcdcd; }
.sb1 .thumb { top: 18px; height: 170px; }
.sb2 .thumb { top: 10px; height: 100px; }

.sash { height: 7px; flex: none; position: relative; }
.sash i { position: absolute; right: 3px; top: 0; border: 3px solid transparent; border-top: 3.500px solid #444; border-bottom: 0; }

.phead { height: 12px; display: grid; grid-template-columns: 137px 1fr; align-items: center; background: linear-gradient(#fff, #efefef); border-bottom: 1px solid #ddd; color: #333; font-size: 7.600px; }
.phead span { padding-left: 1px; }
.pr { height: 11.750px; display: grid; grid-template-columns: 138px 1fr; align-items: center; border-bottom: 1px solid #eef4f8; position: relative; color: #333; }
.pr > span:first-child { padding-left: 13px; }
.gy { color: #8e8e8e; }
.sec { font-weight: 700; font-size: 7.400px; color: #222; background: #fafafa; border-top: 1px solid #ddd; border-bottom: 1px solid #ddd; display: flex; padding-left: 5px; gap: 3px; }
.pr.sec > span:first-child { padding-left: 0; }
.at > span:first-child { padding-left: 18px; display: flex; align-items: center; gap: 2px; }
.ch > span:first-child { padding-left: 39px; }

.right { flex: 1; min-width: 0; display: flex; flex-direction: column; border-left: 1px solid #aaa; margin-left: 1px; padding-right: 4px; position: relative; }
.right::after { content: ""; position: absolute; right: 3px; top: 0; bottom: 2px; width: 1px; background: #bbb; }
.top { height: 348px; display: flex; flex: none; }
.rail { width: 29px; flex: none; display: flex; flex-direction: column; align-items: center; gap: 3px; padding-right: 1px; }
.rail > svg { width: 15px; height: 15px; flex: none; }
.dots4 { width: 17px; height: 2px; flex: none; margin: 2px 0 3px; background: radial-gradient(circle, #333 .8px, transparent 1.1px) left center / 4.500px 2px repeat-x; }
.rl { font: 700 5.500px "Liberation Sans", sans-serif; fill: #555; }
.hlr { width: 19px; height: 19px; background: linear-gradient(#fde0b4, #f6a95c); border: 1px solid #cfc8b8; display: flex; align-items: center; justify-content: center; flex: none; }
.hlr svg { width: 15px; height: 15px; }
.view { width: 704px; flex: none; height: 348px; }
.scene { width: 704px; height: 348px; }
.wire path { fill: none; stroke: #7a52c8; stroke-width: 1; }
.t1g { fill: none; stroke: url(#m1); stroke-width: 6; stroke-dasharray: 1.400 .6; }
.t2g { fill: none; stroke: #0a0006; stroke-width: 7; stroke-dasharray: .8 1.200; stroke-dashoffset: -.300; }
.shade { fill: none; stroke: #0a0006; stroke-width: 16; opacity: .6; }
.hubr { fill: none; stroke: #3c0426; stroke-width: 1; }
.yz { fill: none; stroke: #c6f000; stroke-width: 2.500; stroke-dasharray: 2 1.500; }
.yt { fill: none; stroke: #c6f000; stroke-width: 4.500; }
.az { stroke: #2030e0; stroke-width: 1.500; }
.ay { stroke: #22e020; stroke-width: 1.500; }
.ax2 { stroke: #e02020; stroke-width: 2.500; }
.axes text { font: 11px "Liberation Sans", sans-serif; fill: #dde; }
.minfo { font: 8.700px "Liberation Sans", sans-serif; fill: #e6ebf0; }

.bar2 { height: 21px; border-top: 1px solid #aaa; flex: none; display: flex; align-items: center; padding-left: 4px; }
.bar2 .c svg { width: 14px; height: 14px; }
.nm { font: 700 6px "Liberation Sans", sans-serif; fill: #444; }
.combo { width: 63px; height: 14px; background: #fff; display: flex; align-items: center; flex: none; position: relative; padding-left: 1px; color: #333; font-size: 7.500px; }
.combo svg { width: 13px; height: 13px; margin-right: 2px; flex: none; }
.combo .caret { position: absolute; right: 0; top: -1px; }
.cb2 { width: 72px; }

.hm { flex: 1; min-height: 0; display: flex; border-bottom: 1px solid #aaa; margin-right: 1px; margin-bottom: 3px; }
.hml { width: 636px; flex: none; padding: 6px 0 0 74px; display: flex; flex-direction: column; font-size: 8.500px; color: #444; }
.hr1 { display: flex; height: 12px; align-items: center; flex: none; }
.lb { width: 52px; flex: none; }
.inp { height: 12px; background: #fff; border-top: 1px solid #888; border-left: 1px solid #888; font-size: 8.500px; letter-spacing: 5.400px; padding-left: 5px; line-height: 11px; white-space: nowrap; overflow: hidden; color: #444; flex: none; }
.w411 { width: 411px; }
.w312 { width: 312px; }
.btn { font: inherit; font-size: 8.800px; height: 12px; padding: 0; background: #f0f0f0; border: 1px solid; border-color: #fafafa #888 #888 #fafafa; color: #444; display: flex; align-items: center; justify-content: center; flex: none; }
.save { width: 58px; margin-left: 20px; }
.hr2 { display: flex; margin-top: 15px; flex: none; height: 24px; }
.og { flex: none; }
.g1 { width: 145px; margin-right: 11px; } .g2 { width: 146px; margin-right: 10px; } .g3 { width: 141px; }
.ol { display: block; height: 12px; padding-left: 21px; line-height: 9px; }
.og2 { display: flex; height: 12px; }
.sm { width: 20px; }
.gr { flex: 1; }
.dn2 { border: 3.500px solid transparent; border-top: 4px solid #111; border-bottom: 0; }
.ud { width: 5px; height: 8px; background: #111; clip-path: polygon(50% 0, 100% 42%, 60% 50%, 100% 58%, 50% 100%, 0 58%, 40% 50%, 0 42%); }
.hr3 { display: flex; align-items: center; margin-top: 27px; height: 12px; flex: none; }
.chk { width: 10px; height: 10px; background: #fff; border-top: 1px solid #888; border-left: 1px solid #888; margin-left: 6px; flex: none; }
.cl { margin-left: 4px; width: 157px; flex: none; }
.ol2 { width: 42px; flex: none; }
.hmr { width: 86px; flex: none; padding-top: 6px; display: flex; flex-direction: column; gap: 12.500px; align-items: flex-end; }
.green { width: 86px; height: 13px; background: #52b85a; color: #333; border-color: #7fd084 #2e7a34 #2e7a34 #7fd084; }
.prim { border: 2px solid #1d5a24; }
.red { width: 57px; height: 12px; background: #c25a60; color: #333; border-color: #d88 #8a3a3e #8a3a3e #d88; }

.status { height: 15px; flex: none; display: flex; align-items: stretch; padding-top: 1px; font-size: 8.300px; color: #444; }
.st0 { width: 649px; padding-left: 9px; line-height: 14px; flex: none; }
.cell { border-top: 1px solid #666; border-left: 1px solid #666; display: flex; align-items: center; gap: 2px; padding-left: 3px; flex: none; }
.c82 { width: 82px; } .c94 { width: 94px; } .c93 { width: 93px; }
.cell .sw { width: 7px; height: 7px; border: 1px solid #555; }

.taskbar { height: 26px; flex: none; background: #0c1218; display: flex; align-items: stretch; color: #ddd; }
.start { width: 31px; display: flex; align-items: center; justify-content: center; flex: none; }
.start svg { width: 11px; height: 11px; }
.search { width: 224px; background: #f0f0f0; border: 1px solid #c8c8c8; border-bottom: 0; display: flex; align-items: center; flex: none; padding-left: 6px; color: #555; font-size: 8.900px; position: relative; }
.cort { width: 14px; height: 14px; border: 2px solid #111; border-radius: 50%; flex: none; }
.stxt { margin-left: 5px; flex: 1; }
.search svg { width: 9px; height: 13px; margin-right: 9px; }
.tk { width: 32.300px; flex: none; display: flex; align-items: center; justify-content: center; position: relative; }
.tk svg { width: 16px; height: 16px; }
.search + .tk { width: 32px; }
.mail { width: 34px; }
.run::after { content: ""; position: absolute; left: 2.500px; right: 2.500px; bottom: 0; height: 2px; background: #8cc4ec; }
.tka { background: #2a323a; }
.badge { position: absolute; right: 3px; bottom: 1px; width: 11px; height: 11px; border-radius: 50%; background: #333; border: 1px solid #888; color: #eee; font: 7px/9px "Liberation Sans", sans-serif; text-align: center; }
.tray { margin-left: auto; display: flex; align-items: center; }
.tray > svg { width: 13px; height: 13px; margin-right: 3px; flex: none; }
.tray > svg:first-child { margin-right: 11px; }
.clock { display: flex; flex-direction: column; align-items: center; width: 40px; margin-left: 4px; line-height: 11.500px; font-size: 8.500px; color: #ddd; white-space: nowrap; }
.notif { width: 38px; display: flex; align-items: center; justify-content: center; position: relative; height: 100%; padding-right: 6px; }
.notif svg { width: 13px; height: 13px; }
.notif .badge { right: 10px; bottom: 3px; }
```
